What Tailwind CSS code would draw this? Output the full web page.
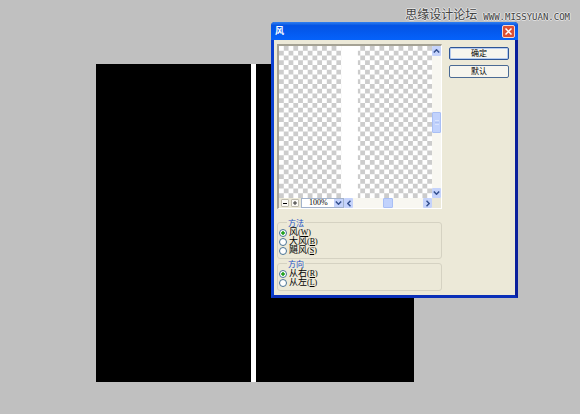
<!DOCTYPE html>
<html lang="zh-CN">
<head>
  <meta charset="UTF-8" />
  <meta name="viewport" content="width=device-width, initial-scale=1.0" />
  <title>风</title>
  <script src="https://cdn.jsdelivr.net/npm/@tailwindcss/browser@4"></script>
</head>
<body class="relative min-h-screen overflow-hidden bg-[#c0c0c0] font-['Liberation_Sans','Noto_Sans_CJK_SC',sans-serif] text-[8px] leading-[9px] text-black">

  <!-- document canvas -->
  <main class="absolute left-[96px] top-[64px] flex h-[318px] w-[318px] bg-black">
    <div class="ml-[155px] w-[5px] bg-white"></div>
  </main>

  <!-- wind dialog -->
  <section class="absolute left-[271px] top-[22px] flex h-[276px] w-[247px] flex-col rounded-t-[4px] border-x-[3px] border-b-[3px] border-l-[#0a3fd0] border-r-[#0a1f9c] border-b-[#0a2fb8] bg-[#ece9d8]">
    <header class="-mx-[3px] flex h-[18px] shrink-0 items-center justify-between rounded-t-[4px] bg-linear-to-b from-[#2f7ff0] via-[#0453e4] via-20% to-[#0562fb] pl-[4px] pr-[3px]">
      <h1 class="text-[9px] font-bold leading-[12px] text-white">风</h1>
      <button aria-label="关闭" class="flex size-[13px] items-center justify-center rounded-[2px] border border-[#f4d8d0] bg-[#dc5034]">
        <svg class="size-[7px]" viewBox="0 0 7 7" stroke="#fff" stroke-width="1.5"><path d="M0.5 0.5l6 6M6.5 0.5l-6 6" /></svg>
      </button>
    </header>

    <div class="flex grow gap-[7px] pl-[3px] pr-[6px] pt-[4px]">
      <div class="flex w-[165px] flex-col">

        <!-- preview -->
        <div class="flex h-[165px] flex-col border-b border-l-2 border-r border-t-2 border-b-white border-l-[#a5a294] border-r-white border-t-[#a5a294]">
          <div class="flex h-[152px]">
            <div class="flex grow">
              <svg class="h-full w-full" viewBox="0 0 32 32" preserveAspectRatio="none">
                <defs>
                  <pattern id="checker" width="2" height="2" patternUnits="userSpaceOnUse">
                    <path fill="#fff" d="M0 0h2v2H0z" />
                    <path fill="#ccc" d="M1 0h1v1H1zM0 1h1v1H0z" />
                  </pattern>
                </defs>
                <path fill="url(#checker)" d="M0 0h32v32H0z" />
                <path fill="#fff" d="M13 0h3.5v32H13z" />
              </svg>
            </div>
            <div class="flex w-[9px] flex-col bg-[#f8f7f1]">
              <button aria-label="向上" class="flex h-[10px] items-center justify-center rounded-[1px] bg-[#c5d3fb]">
                <svg class="h-[4px] w-[7px]" viewBox="0 0 7 4" fill="none" stroke="#34508f" stroke-width="1.5"><path d="M0.8 3.5l2.7-2.7 2.7 2.7" /></svg>
              </button>
              <div class="mt-[56px] flex h-[21px] flex-col items-center justify-center gap-px rounded-[1px] border border-[#a9bff5] bg-[#c1d2fc]">
                <i class="h-px w-[4px] bg-[#d8e3fe]"></i>
                <i class="h-px w-[4px] bg-[#b0c3f5]"></i>
                <i class="h-px w-[4px] bg-[#d8e3fe]"></i>
              </div>
              <button aria-label="向下" class="mt-auto flex h-[10px] items-center justify-center rounded-[1px] bg-[#c5d3fb]">
                <svg class="h-[4px] w-[7px]" viewBox="0 0 7 4" fill="none" stroke="#34508f" stroke-width="1.5"><path d="M0.8 0.5l2.7 2.7 2.7-2.7" /></svg>
              </button>
            </div>
          </div>

          <div class="flex h-[10px] items-center bg-[#ece9d8] pl-[2px]">
            <button aria-label="缩小" class="flex size-[8px] items-center justify-center rounded-[1px] border border-[#c0bdb0] bg-[#fbfaf6]"><i class="h-px w-[4px] bg-black"></i></button>
            <button aria-label="放大" class="ml-[2px] flex size-[8px] items-center justify-center rounded-[1px] border border-[#c0bdb0] bg-[#fbfaf6]">
              <svg class="size-[4px]" viewBox="0 0 4 4" stroke="#333"><path d="M0 2h4M2 0v4" /></svg>
            </button>
            <div class="relative ml-[2px] h-[10px] w-[43px]">
              <select aria-label="缩放比例" class="block h-[10px] w-full appearance-none border border-[#a3b3cc] bg-white pl-[7px] font-['Liberation_Serif',serif] text-[8px] leading-[8px]">
                <option>100%</option>
              </select>
              <span class="pointer-events-none absolute right-px top-px flex h-[8px] w-[9px] items-center justify-center bg-[#c5d3fb]">
                <svg class="h-[4px] w-[7px]" viewBox="0 0 7 4" fill="none" stroke="#34508f" stroke-width="1.5"><path d="M0.8 0.5l2.7 2.7 2.7-2.7" /></svg>
              </span>
            </div>
            <div class="flex h-[10px] grow bg-[#f8f7f1]">
              <button aria-label="向左" class="flex w-[9px] items-center justify-center rounded-[1px] bg-[#c5d3fb]">
                <svg class="h-[7px] w-[4px]" viewBox="0 0 4 7" fill="none" stroke="#34508f" stroke-width="1.5"><path d="M3.5 0.8l-2.7 2.7 2.7 2.7" /></svg>
              </button>
              <div class="ml-[30px] w-[10px] rounded-[1px] border border-[#a9bff5] bg-[#c1d2fc]"></div>
              <button aria-label="向右" class="ml-auto flex w-[9px] items-center justify-center rounded-[1px] bg-[#c5d3fb]">
                <svg class="h-[7px] w-[4px]" viewBox="0 0 4 7" fill="none" stroke="#34508f" stroke-width="1.5"><path d="M0.5 0.8l2.7 2.7-2.7 2.7" /></svg>
              </button>
            </div>
            <div class="h-[10px] w-[9px]"></div>
          </div>
        </div>

        <fieldset class="mt-[7px] flex flex-col rounded-[3px] border border-[#d5d2c2] pb-[3px] pl-px">
          <legend class="ml-[8px] px-px pt-[3px] text-[#1b4fc4]">方法</legend>
          <label class="flex items-center gap-[2px]"><input type="radio" name="method" checked class="size-[8px] appearance-none rounded-full border border-[#4a7396] bg-white checked:bg-[radial-gradient(#21a121_35%,#fff_45%)]" /><span class="text-[9px]">风<span class="font-['Liberation_Serif',serif] text-[8px]">(<u>W</u>)</span></span></label>
          <label class="flex items-center gap-[2px]"><input type="radio" name="method" class="size-[8px] appearance-none rounded-full border border-[#4a7396] bg-white checked:bg-[radial-gradient(#21a121_35%,#fff_45%)]" /><span class="text-[9px]">大风<span class="font-['Liberation_Serif',serif] text-[8px]">(<u>B</u>)</span></span></label>
          <label class="flex items-center gap-[2px]"><input type="radio" name="method" class="size-[8px] appearance-none rounded-full border border-[#4a7396] bg-white checked:bg-[radial-gradient(#21a121_35%,#fff_45%)]" /><span class="text-[9px]">飓风<span class="font-['Liberation_Serif',serif] text-[8px]">(<u>S</u>)</span></span></label>
        </fieldset>

        <fieldset class="-mt-[2px] flex flex-col rounded-[3px] border border-[#d5d2c2] pb-[3px] pl-px">
          <legend class="ml-[8px] px-px pt-[3px] text-[#1b4fc4]">方向</legend>
          <label class="flex items-center gap-[2px]"><input type="radio" name="direction" checked class="size-[8px] appearance-none rounded-full border border-[#4a7396] bg-white checked:bg-[radial-gradient(#21a121_35%,#fff_45%)]" /><span class="text-[9px]">从右<span class="font-['Liberation_Serif',serif] text-[8px]">(<u>R</u>)</span></span></label>
          <label class="flex items-center gap-[2px]"><input type="radio" name="direction" class="size-[8px] appearance-none rounded-full border border-[#4a7396] bg-white checked:bg-[radial-gradient(#21a121_35%,#fff_45%)]" /><span class="text-[9px]">从左<span class="font-['Liberation_Serif',serif] text-[8px]">(<u>L</u>)</span></span></label>
        </fieldset>
      </div>

      <div class="flex grow flex-col gap-[5px] pt-[3px]">
        <button class="h-[13px] rounded-[2px] border border-[#2d5596] bg-[#f6f5ee] shadow-[inset_0_0_0_1px_#b5cbf0]">确定</button>
        <button class="h-[13px] rounded-[2px] border border-[#4a6a94] bg-[#f6f5ee]">默认</button>
      </div>
    </div>
  </section>

  <!-- watermark -->
  <div class="absolute right-[10px] top-[7px] flex items-center gap-[6px] whitespace-nowrap text-[#444] [text-shadow:1px_0_#e4e4e4,-1px_0_#e4e4e4,0_1px_#e4e4e4,0_-1px_#e4e4e4]">
    <span class="text-[12px] leading-[16px]">思缘设计论坛</span>
    <span class="pt-[3px] font-['DejaVu_Sans_Mono',monospace] text-[9px] leading-[12px]">WWW.MISSYUAN.COM</span>
  </div>
</body>
</html>
